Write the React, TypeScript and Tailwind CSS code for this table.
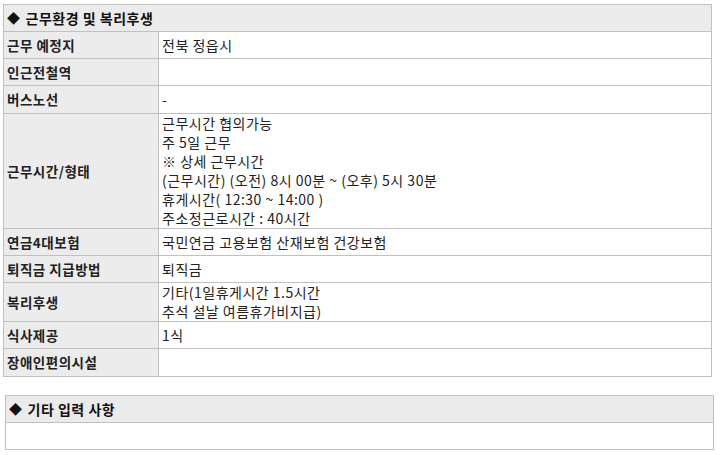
const rows: { label: string; lines: string[]; tall?: boolean }[] = [
  { label: '근무 예정지', lines: ['전북 정읍시'] },
  { label: '인근전철역', lines: [] },
  { label: '버스노선', lines: ['-'], tall: true },
  {
    label: '근무시간/형태',
    lines: [
      '근무시간 협의가능',
      '주 5일 근무',
      '※ 상세 근무시간',
      '(근무시간) (오전) 8시 00분 ~ (오후) 5시 30분',
      '휴게시간( 12:30 ~ 14:00 )',
      '주소정근로시간 : 40시간',
    ],
  },
  { label: '연금4대보험', lines: ['국민연금 고용보험 산재보험 건강보험'] },
  { label: '퇴직금 지급방법', lines: ['퇴직금'] },
  { label: '복리후생', lines: ['기타(1일휴게시간 1.5시간', '추석 설날 여름휴가비지급)'] },
  { label: '식사제공', lines: ['1식'] },
  { label: '장애인편의시설', lines: [] },
];

const SectionHeader = ({ title }: { title: string }) => (
  <div className="flex h-[27px] items-center gap-[5px] border-b border-[#c0c0c0] bg-[#ebebeb] pl-[3px] text-[14px] font-bold tracking-[0.5px] text-[#111]">
    <span className="text-[13px]">◆</span>
    <span>{title}</span>
  </div>
);

export default function App() {
  return (
    <div
      className="min-h-[455px] bg-white pt-[4px] text-[#222]"
      style={{ fontFamily: '"Noto Sans CJK KR", "Noto Sans", sans-serif' }}
    >
      <div className="ml-[3px] w-[709px] border border-[#c0c0c0]">
        <SectionHeader title="근무환경 및 복리후생" />
        {rows.map((row, i) => (
          <div
            key={row.label}
            className={`flex ${row.tall ? 'min-h-[28px]' : 'min-h-[27px]'} ${
              i < rows.length - 1 ? 'border-b border-[#c0c0c0]' : ''
            }`}
          >
            <div className="flex w-[155px] shrink-0 items-center border-r border-[#c0c0c0] bg-[#ececec] pl-[3px] text-[13.5px] font-bold tracking-[0.5px]">
              {row.label}
            </div>
            <div className="flex flex-1 flex-col justify-center pl-[3px] text-[14px] leading-[19px] tracking-[0.5px]">
              {row.lines.map((line) => (
                <div key={line}>{line}</div>
              ))}
            </div>
          </div>
        ))}
      </div>

      <div className="ml-[5px] mt-[18px] w-[709px] border border-[#c0c0c0]">
        <SectionHeader title="기타 입력 사항" />
        <div className="h-[26px]" />
      </div>
    </div>
  );
}
